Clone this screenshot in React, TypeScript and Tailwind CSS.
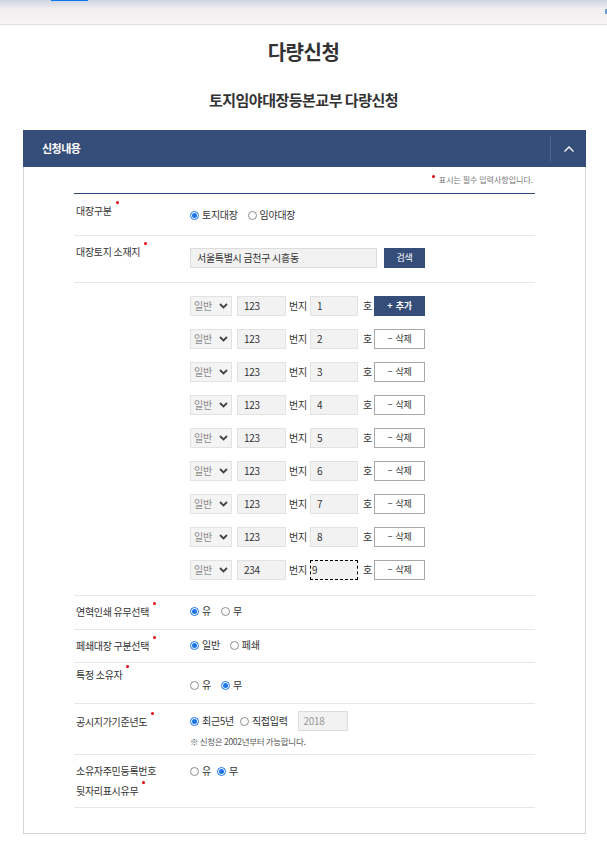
import React from "react";

const font = { fontFamily: '"Noto Sans CJK KR", "Noto Sans", sans-serif' };

type Addr = { main: string; sub: string; add?: boolean; focused?: boolean };

const addresses: Addr[] = [
  { main: "123", sub: "1", add: true },
  { main: "123", sub: "2" },
  { main: "123", sub: "3" },
  { main: "123", sub: "4" },
  { main: "123", sub: "5" },
  { main: "123", sub: "6" },
  { main: "123", sub: "7" },
  { main: "123", sub: "8" },
  { main: "234", sub: "9", focused: true },
];

function Dot() {
  return (
    <span className="absolute -right-[7px] -top-[3px] h-[3px] w-[3px] rounded-full bg-[#e60012]" />
  );
}

function Label({ children }: { children: React.ReactNode }) {
  return (
    <span className="relative inline-block leading-[14px]">
      {children}
      <Dot />
    </span>
  );
}

function Radio({ checked, label }: { checked?: boolean; label: string }) {
  return (
    <span className="flex h-[14px] items-center gap-[3px]">
      {checked ? (
        <span className="flex h-[9px] w-[9px] items-center justify-center rounded-full border border-[#1a73e8] bg-white">
          <span className="h-[5px] w-[5px] rounded-full bg-[#1a73e8]" />
        </span>
      ) : (
        <span className="h-[9px] w-[9px] rounded-full border border-[#8d8d8d] bg-white" />
      )}
      <span>{label}</span>
    </span>
  );
}

function AddressRow({ a }: { a: Addr }) {
  return (
    <div className="flex h-[20px] items-center text-[10px]">
      <div className="flex h-[20px] w-[42px] items-center justify-between border border-[#e2e2e2] bg-[#f4f4f4] pl-[3px] pr-[3px] text-[#8a8a8a]">
        <span>일반</span>
        <svg width="9" height="6" viewBox="0 0 9 6">
          <path d="M1 1 L4.5 4.5 L8 1" fill="none" stroke="#444" strokeWidth="1.8" />
        </svg>
      </div>
      <div className="ml-[5px] flex h-[20px] w-[49px] items-center border border-[#e2e2e2] bg-[#f2f2f2] pl-[6px] text-[#333]">
        {a.main}
      </div>
      <span className="ml-[3px] w-[21px] text-[#333]">번지</span>
      <div
        className={
          a.focused
            ? "flex h-[20px] w-[48px] items-center border border-dashed border-black bg-[#f2f2f2] pl-[1px] text-[#333]"
            : "flex h-[20px] w-[48px] items-center border border-[#e2e2e2] bg-[#f2f2f2] pl-[6px] text-[#333]"
        }
      >
        {a.sub}
      </div>
      <span className="ml-[5px] w-[11px] text-[#333]">호</span>
      {a.add ? (
        <div className="flex h-[20px] w-[51px] items-center justify-center bg-[#344d79] text-[9px] font-bold text-white">
          +&nbsp; 추가
        </div>
      ) : (
        <div className="flex h-[20px] w-[51px] items-center justify-center border border-[#a8a8a8] bg-white text-[9px] text-[#333]">
          −&nbsp; 삭제
        </div>
      )}
    </div>
  );
}

export default function App() {
  return (
    <div className="min-h-[841px] bg-white text-[#333]" style={font}>
      <div className="relative h-[25px] border-b border-[#e3dfdf] bg-[linear-gradient(#cdd4e2,#f1eff1_9px,#f5f3f4)]">
        <div className="absolute left-[51px] top-0 h-[1px] w-[37px] bg-[#0b78f2]" />
        <div className="absolute right-0 top-[9px] h-[5px] w-[2px] bg-[#6b9ad8]" />
      </div>

      <h1 className="mt-[13px] text-center text-[20px] font-bold leading-[28px] tracking-[-0.5px] text-[#333]">
        다량신청
      </h1>
      <h2 className="mt-[23px] text-center text-[15px] font-bold leading-[22px] tracking-[-0.5px] text-[#333]">
        토지임야대장등본교부 다량신청
      </h2>

      <div className="mx-[23px] mt-[19px] w-[563px]">
        <div className="flex h-[37px] items-center bg-[#344d79] pl-[19px] text-white">
          <span className="flex-1 text-[11px] font-bold tracking-[-0.5px]">신청내용</span>
          <div className="h-[26px] w-px bg-[#4c638c]" />
          <div className="flex w-[35px] justify-center">
            <svg width="12" height="8" viewBox="0 0 12 8">
              <path d="M1.5 6.5 L6 2 L10.5 6.5" fill="none" stroke="#fff" strokeWidth="1.3" />
            </svg>
          </div>
        </div>

        <div className="border border-t-0 border-[#d4d4d4] px-[50px] pb-[25px]">
          <div className="flex h-[26px] items-center justify-end pr-[2px] text-[8px] text-[#777]">
            <span className="relative mr-[4px] -top-[4px] h-[3px] w-[3px] rounded-full bg-[#e60012]" />
            표시는 필수 입력사항입니다.
          </div>
          <div className="border-t border-[#2f4a7a] text-[10px] leading-[14px] tracking-[-0.3px]">
            <div className="flex h-[42px] items-start border-b border-[#e6e6e6]">
              <div className="w-[116px] pl-[2px] pt-[10px]">
                <Label>대장구분</Label>
              </div>
              <div className="flex items-start gap-[10px] pt-[14px]">
                <Radio checked label="토지대장" />
                <Radio label="임야대장" />
              </div>
            </div>

            <div className="flex h-[47px] items-start border-b border-[#e6e6e6]">
              <div className="w-[116px] pl-[2px] pt-[9px]">
                <Label>대장토지 소재지</Label>
              </div>
              <div className="flex items-start gap-[7px] pt-[12px]">
                <div className="flex h-[20px] w-[187px] items-center border border-[#dcdcdc] bg-[#f2f2f2] pl-[6px] text-[#333]">
                  서울특별시 금천구 시흥동
                </div>
                <div className="flex h-[20px] w-[41px] items-center justify-center bg-[#344d79] text-[9px] text-white">
                  검색
                </div>
              </div>
            </div>

            <div className="flex flex-col gap-[13px] border-b border-[#e6e6e6] pb-[15px] pl-[116px] pt-[13px]">
              {addresses.map((a, i) => (
                <AddressRow key={i} a={a} />
              ))}
            </div>

            <div className="flex h-[34px] items-start border-b border-[#e6e6e6]">
              <div className="w-[116px] pl-[2px] pt-[9px]">
                <Label>연혁인쇄 유무선택</Label>
              </div>
              <div className="flex items-start gap-[10px] pt-[8px]">
                <Radio checked label="유" />
                <Radio label="무" />
              </div>
            </div>

            <div className="flex h-[33px] items-start border-b border-[#e6e6e6]">
              <div className="w-[116px] pl-[2px] pt-[9px]">
                <Label>페쇄대장 구분선택</Label>
              </div>
              <div className="flex items-start gap-[10px] pt-[8px]">
                <Radio checked label="일반" />
                <Radio label="페쇄" />
              </div>
            </div>

            <div className="flex h-[41px] items-start border-b border-[#e6e6e6]">
              <div className="w-[116px] pl-[2px] pt-[5px]">
                <Label>특정 소유자</Label>
              </div>
              <div className="flex items-start gap-[10px] pt-[15px]">
                <Radio label="유" />
                <Radio checked label="무" />
              </div>
            </div>

            <div className="flex h-[51px] items-start border-b border-[#e6e6e6]">
              <div className="w-[116px] pl-[2px] pt-[11px]">
                <Label>공시지가기준년도</Label>
              </div>
              <div className="pt-[7px]">
                <div className="flex h-[20px] items-center gap-[6px]">
                  <Radio checked label="최근5년" />
                  <Radio label="직접입력" />
                  <div className="ml-[4px] flex h-[20px] w-[50px] items-center border border-[#dcdcdc] bg-[#f2f2f2] pl-[5px] text-[#9a9a9a]">
                    2018
                  </div>
                </div>
                <div className="mt-[4px] text-[8.5px] leading-[12px] text-[#555]">
                  ※ 신청은 2002년부터 가능합니다.
                </div>
              </div>
            </div>

            <div className="flex h-[53px] items-start border-b border-[#e6e6e6]">
              <div className="w-[116px] pl-[2px] pt-[6px] leading-[20px]">
                소유자주민등록번호
                <br />
                <Label>뒷자리표시유무</Label>
              </div>
              <div className="flex items-start gap-[6px] pt-[9px]">
                <Radio label="유" />
                <Radio checked label="무" />
              </div>
            </div>
          </div>
        </div>
      </div>
    </div>
  );
}
